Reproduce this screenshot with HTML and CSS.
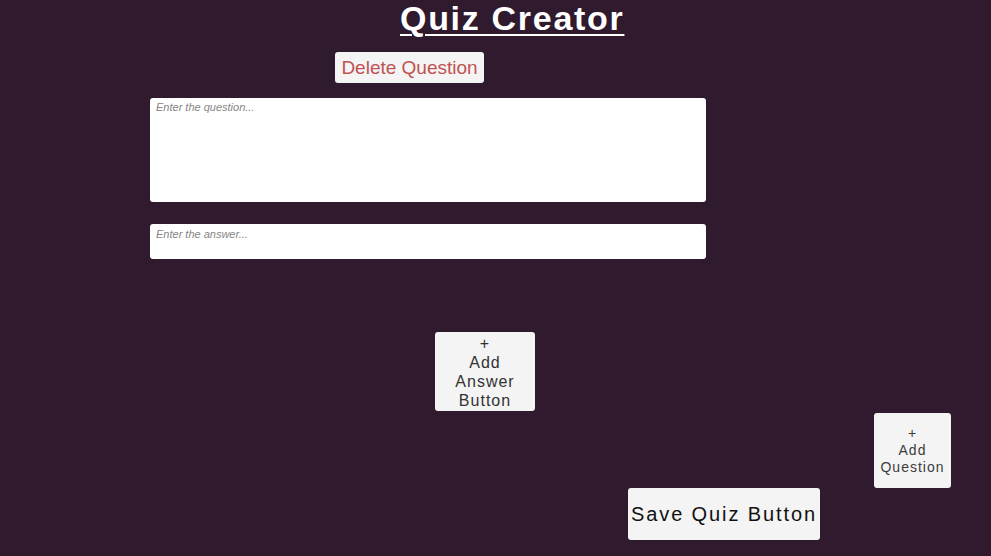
FILE: index.html
```html
<!DOCTYPE html>
<html lang="en">
<head>
    <meta charset="UTF-8">
    <meta name="viewport" content="width=device-width, initial-scale=1.0">
    <title>Quiz Creator</title>
    <link rel="stylesheet" href="styles.css">
</head>
<body>
    <main class="creator">
        <h1 class="title">Quiz Creator</h1>

        <!-- one question with its answers -->
        <section class="question">
            <button class="btn delete-btn" type="button">Delete Question</button>
            <textarea class="question-input" placeholder="Enter the question..."></textarea>
            <input class="answer-input" type="text" placeholder="Enter the answer...">
            <button class="btn add-answer" type="button">+<br>Add<br>Answer<br>Button</button>
        </section>

        <button class="btn add-question" type="button">+<br>Add<br>Question</button>
        <button class="btn save-btn" type="button">Save Quiz Button</button>
    </main>
</body>
</html>
```

FILE: styles.css
```css
body {
    margin: 0;
    background: #2f1a2e;
    font-family: 'Liberation Sans', Arial, sans-serif;
    height: 556px;
    overflow: hidden;
}

.creator {
    display: flex;
    flex-direction: column;
    align-items: flex-start;
}

.title {
    margin: 0 0 0 400px;
    font-size: 34px;
    line-height: 36px;
    font-weight: bold;
    letter-spacing: 1.7px;
    color: #ffffff;
    text-decoration: underline;
    text-decoration-thickness: 2px;
    text-underline-offset: 4px;
}

.question {
    display: flex;
    flex-direction: column;
    align-items: flex-start;
}

.btn {
    display: flex;
    flex-direction: column;
    align-items: center;
    justify-content: center;
    background: #f4f4f4;
    border: none;
    border-radius: 3px;
    padding: 0;
    font-family: 'Liberation Sans', Arial, sans-serif;
    color: #323232;
    cursor: pointer;
}

.delete-btn {
    margin: 16px 0 0 335px;
    width: 149px;
    height: 31px;
    font-size: 19px;
    color: #bf5252;
}

.question-input,
.answer-input {
    box-sizing: border-box;
    margin-left: 150px;
    width: 556px;
    background: #ffffff;
    border: none;
    border-radius: 3px;
    padding: 3px 6px;
    font-family: 'Liberation Sans', Arial, sans-serif;
    font-size: 11px;
    line-height: 13px;
    outline: none;
    resize: none;
}

.question-input::placeholder,
.answer-input::placeholder {
    color: #858585;
    font-style: italic;
}

.question-input {
    margin-top: 15px;
    height: 104px;
    display: block;
}

.answer-input {
    margin-top: 22px;
    height: 35px;
    padding-bottom: 19px;
}

.add-answer {
    margin: 73px 0 0 435px;
    width: 100px;
    height: 79px;
    font-size: 16px;
    line-height: 19px;
    letter-spacing: 1px;
}

.add-question {
    margin: 2px 0 0 874px;
    width: 77px;
    height: 75px;
    font-size: 14px;
    line-height: 17px;
    letter-spacing: 1px;
    color: #3c3c3c;
}

.save-btn {
    margin-left: 628px;
    width: 192px;
    height: 52px;
    font-size: 20px;
    letter-spacing: 1.9px;
    color: #111111;
}
```
